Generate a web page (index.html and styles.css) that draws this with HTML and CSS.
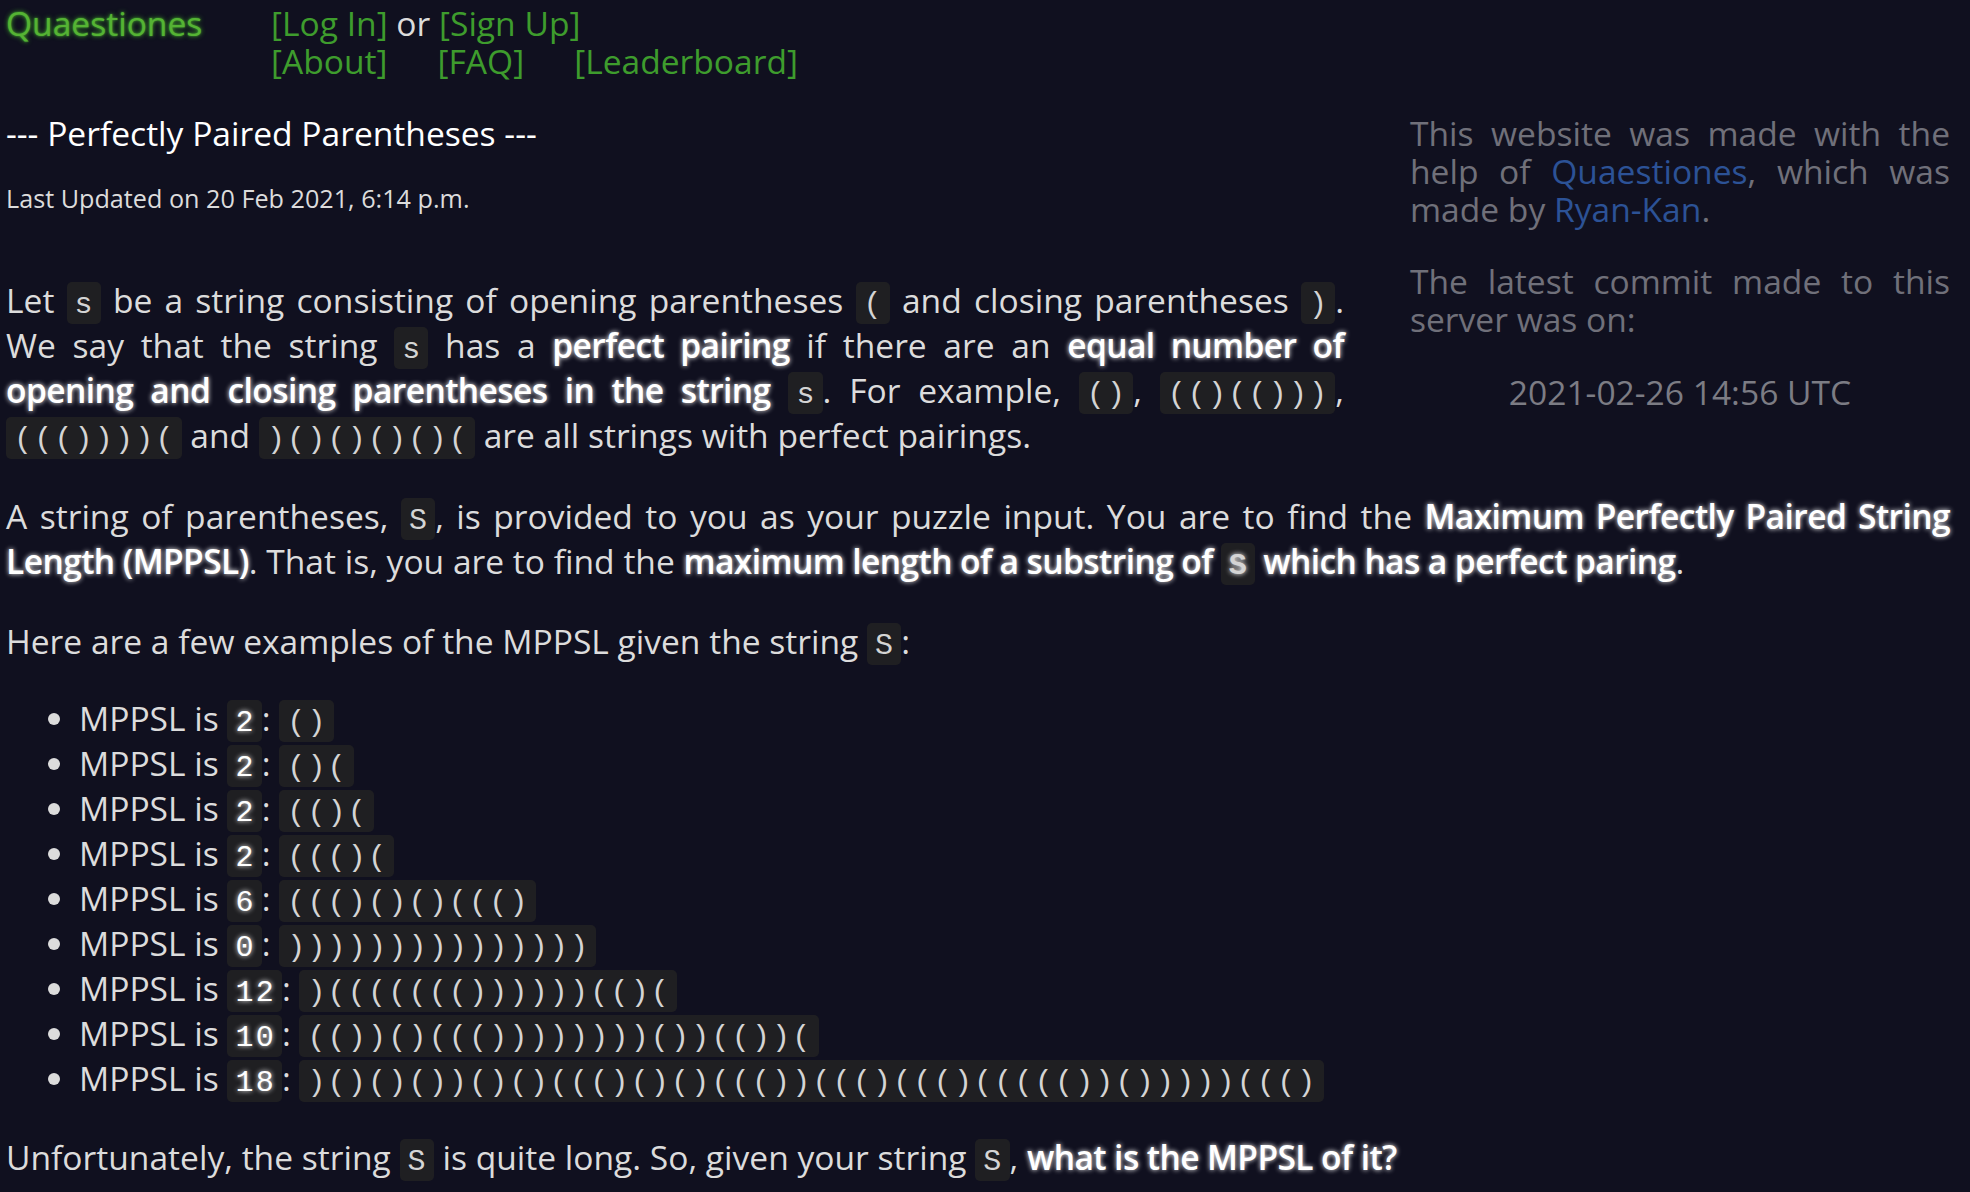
FILE: index.html
```html
<!DOCTYPE html>
<html lang="en">
<head>
<meta charset="utf-8">
<title>Perfectly Paired Parentheses - Quaestiones</title>
<link rel="stylesheet" href="styles.css">
</head>
<body>
<header class="top">
  <a class="brand" href="#">Quaestiones</a>
  <nav class="nav">
    <div class="nav-row"><a href="#">[Log In]</a> or <a href="#">[Sign Up]</a></div>
    <div class="nav-row nav-gap"><a href="#">[About]</a><a href="#">[FAQ]</a><a href="#">[Leaderboard]</a></div>
  </nav>
</header>
<main class="page">
  <aside class="sidebar">
    <p>This website was made with the help of <a href="#">Quaestiones</a>, which was made by <a href="#">Ryan-Kan</a>.</p>
    <p>The latest commit made to this server was on:</p>
    <p class="commit">2021-02-26 14:56 UTC</p>
  </aside>
  <article class="puzzle">
    <h2 class="title">--- Perfectly Paired Parentheses ---</h2>
    <p class="updated">Last Updated on 20 Feb 2021, 6:14 p.m.</p>
    <p class="just">Let <code>s</code> be a string consisting of opening parentheses <code>(</code> and closing parentheses <code>)</code>. We say that the string <code>s</code> has a <em>perfect pairing</em> if there are an <em>equal number of opening and closing parentheses in the string</em> <code>s</code>. For example, <code>()</code>, <code>(()(()))</code>, <code>((())))(</code> and <code>)()()()()(</code> are all strings with perfect pairings.</p>
    <p class="just">A string of parentheses, <code>S</code>, is provided to you as your puzzle input. You are to find the <em>Maximum Perfectly Paired String Length (MPPSL)</em>. That is, you are to find the <em>maximum length of a substring of <code>S</code> which has a perfect paring</em>.</p>
    <p class="intro">Here are a few examples of the MPPSL given the string <code>S</code>:</p>
    <ul class="examples">
      <li>MPPSL is <code><em>2</em></code>: <code>()</code></li>
      <li>MPPSL is <code><em>2</em></code>: <code>()(</code></li>
      <li>MPPSL is <code><em>2</em></code>: <code>(()(</code></li>
      <li>MPPSL is <code><em>2</em></code>: <code>((()(</code></li>
      <li>MPPSL is <code><em>6</em></code>: <code>((()()()((()</code></li>
      <li>MPPSL is <code><em>0</em></code>: <code>)))))))))))))))</code></li>
      <li>MPPSL is <code><em>12</em></code>: <code>)((((((())))))(()(</code></li>
      <li>MPPSL is <code><em>10</em></code>: <code>(())()((())))))))())(())(</code></li>
      <li>MPPSL is <code><em>18</em></code>: <code>)()()())()()((()()()((())((()((()((((())()))))((()</code></li>
    </ul>
    <p>Unfortunately, the string <code>S</code> is quite long. So, given your string <code>S</code>, <em>what is the MPPSL of it?</em></p>
  </article>
</main>
</body>
</html>
```
FILE: styles.css
```css
html, body {
  margin: 0;
  padding: 0;
  background: #10101f;
}

body {
  color: #dcdcdc;
  font-family: "Open Sans", "Noto Sans", sans-serif;
  font-size: 33.6px;
  line-height: 38px;
  padding: 4px 20px 0 6px;
}

a {
  color: #3e9c2d;
  text-decoration: none;
}

.top {
  display: flex;
  align-items: flex-start;
}

.brand {
  width: 265px;
  color: #55b334;
  text-shadow: 0 0 2px #3f9f2a, 0 0 5px #3f9f2a;
}

.nav-row {
  white-space: nowrap;
}

.nav-gap {
  display: flex;
  gap: 50px;
}

.page {
  margin-top: 34px;
}

.sidebar {
  float: right;
  width: 540px;
  margin-left: 66px;
  color: #70707a;
  text-align: justify;
}

.sidebar p {
  margin: 0 0 34px;
}

.sidebar a {
  color: #2c5296;
}

.sidebar .commit {
  text-align: center;
  color: #7c7c84;
  margin-top: 35px;
}

.title {
  margin: 0;
  font-size: 1em;
  font-weight: normal;
  color: #ffffff;
}

.updated {
  font-size: 25.2px;
  line-height: 28px;
  margin: 32px 0 66px;
}

.puzzle p {
  line-height: 45px;
}

.puzzle .updated {
  line-height: 28px;
}

.just {
  text-align: justify;
}

p {
  margin: 0 0 35.5px;
}

.puzzle .intro {
  margin-bottom: 32px;
}

em {
  font-style: normal;
  font-weight: 600;
  letter-spacing: -0.6px;
  color: #ffffff;
  text-shadow: 0 0 5px #ffffff;
}

code {
  font-family: "Liberation Mono", "DejaVu Sans Mono", monospace;
  font-size: 30px;
  line-height: 30px;
  letter-spacing: 2.2px;
  background: #1f1f22;
  border-radius: 5px;
  padding: 6px 6px 2px 8px;
  color: #d4d4d4;
}

code em {
  font-weight: normal;
  letter-spacing: 2.2px;
}

.examples {
  margin: 0 0 34px;
  padding-left: 73px;
  line-height: 45px;
}
```
